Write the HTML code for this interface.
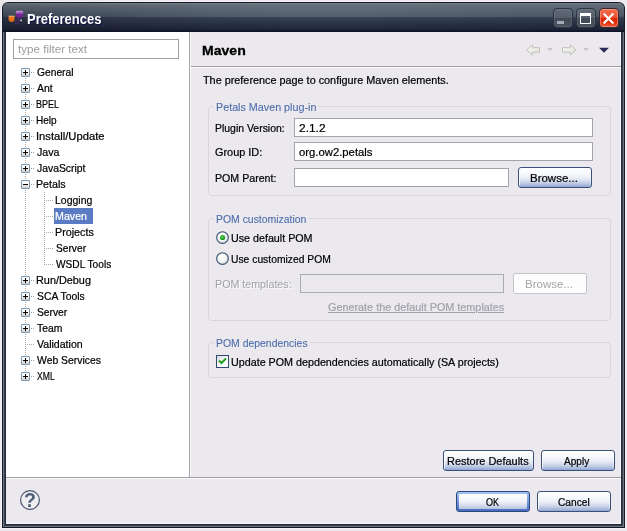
<!DOCTYPE html>
<html>
<head>
<meta charset="utf-8">
<title>Preferences</title>
<style>
html,body{margin:0;padding:0;}
body{width:627px;height:531px;overflow:hidden;position:relative;background:#ebe9ee;font-family:"Liberation Sans",sans-serif;font-size:11px;color:#000;}
div,span,i{position:absolute;box-sizing:border-box;}
#root{left:0;top:0;width:627px;height:531px;will-change:transform;}
.t{white-space:pre;line-height:14px;transform-origin:0 0;-webkit-text-stroke:0.22px;}
/* window frame */
#frame{left:2px;top:2px;width:623px;height:526px;background:#161b26;border-radius:6px 6px 0 0;box-shadow:0 0 0 1px #f5f3f9;}
#frame2{left:3px;top:3px;width:621px;height:524px;background:#6a7480;border-radius:5px 5px 0 0;}
#frame3{left:4px;top:4px;width:619px;height:522px;background:#3a4250;border-radius:4px 4px 0 0;}
#frame4{left:5px;top:5px;width:617px;height:520px;background:#242a3a;}
#tbar{left:3px;top:3px;width:621px;height:29px;border-radius:5px 5px 0 0;
  background:linear-gradient(to bottom,#7c868f 0,#6b7681 1px,#64707b 2px,#535f6e 13.5px,#3a4557 14px,#2c3548 20px,#1e2438 27px,#10142a 28px,#10142a 29px);}
#tshade{left:3px;top:3px;width:621px;height:29px;border-radius:5px 5px 0 0;-webkit-mask-image:linear-gradient(to bottom,rgba(0,0,0,.25) 0,rgba(0,0,0,.6) 20%,#000 48%,#000 100%);mask-image:linear-gradient(to bottom,rgba(0,0,0,.25) 0,rgba(0,0,0,.6) 20%,#000 48%,#000 100%);
  background:linear-gradient(to right,rgba(10,14,24,.32) 0,rgba(10,14,24,.24) 15%,rgba(10,14,24,.08) 32%,rgba(10,14,24,0) 45%,rgba(10,14,24,0) 60%,rgba(10,14,24,.08) 85%,rgba(10,14,24,.1) 100%);}
#client{left:6px;top:32px;width:615px;height:492px;background:#ebe9ed;}
.ttl{text-shadow:1px 1px 0 #0c1450;}
/* caption buttons */
.cb{top:8px;width:20px;height:20px;border-radius:4px;border:1px solid #2a323e;box-shadow:inset 0 0 0 1px rgba(140,150,165,.22);background:linear-gradient(to bottom,#616c78 0,#545f6b 48%,#414b57 52%,#48525e 100%);}
#bclose{border-color:#3a2a30;box-shadow:inset 0 0 0 1px rgba(255,190,170,.45);background:linear-gradient(to bottom,#f06c4c 0,#ea5232 46%,#df2404 52%,#e2300c 75%,#ea5a3c 100%);}
/* left pane */
#lpane{left:6px;top:32px;width:183px;height:445px;background:#fff;}
#sash{left:189px;top:32px;width:1px;height:445px;background:#a5a3a8;}
#filter{left:13px;top:39px;width:166px;height:20px;border:1px solid #9f9fa3;background:#fff;}
.xb{width:9px;height:9px;border:1px solid #7898b5;border-radius:1px;background:linear-gradient(to bottom,#fff 0,#fcfcfb 40%,#cfcdc4 100%);}
.xb .h{left:1px;top:3px;width:5px;height:1px;background:#000;}
.xb .v{left:3px;top:1px;width:1px;height:5px;background:#000;}
.dh{height:1px;background-image:repeating-linear-gradient(to right,#a6a6a6 0,#a6a6a6 1px,transparent 1px,transparent 2px);}
.dv{width:1px;background-image:repeating-linear-gradient(to bottom,#a6a6a6 0,#a6a6a6 1px,transparent 1px,transparent 2px);}
#sel{left:54px;top:208px;width:39px;height:16px;background:#5b7cc4;}
/* right pane */
.hsep{height:1px;background:#a09ea4;}
.grp{left:208px;width:403px;border:1px solid #d8d6db;border-radius:4px;}
.leg{background:#ebe9ed;height:3px;}
.inp{height:19px;border:1px solid #a3a3ab;background:#fff;}
.btn{height:21px;border:1px solid #3b5079;border-radius:3px;background:linear-gradient(to bottom,#fdfeff 0,#f7f8fc 30%,#eceff6 50%,#d3dbec 70%,#aebedd 88%,#8fa6d1 100%);box-shadow:inset 1px 1px 0 0 rgba(255,255,255,.75),inset -1px 0 0 0 rgba(255,255,255,.35);}
.btn.def{box-shadow:none;border-color:#2c4880;background:linear-gradient(to bottom,#a4c2f2 0,#7a9ee2 45%,#5d84d2 75%,#466cbe 100%);}
.btn.def i{left:2px;top:2px;right:2px;bottom:2px;border-radius:1px;background:linear-gradient(to bottom,#fdfeff 0,#f7f8fc 30%,#eceff6 55%,#d3dbec 78%,#b4c3e0 100%);}
.btn.off{border-color:#c6c4cb;background:#fdfdfe;box-shadow:none;border-radius:2px;}
.dis{text-shadow:1px 1px 0 #fff;-webkit-text-stroke:0;}
.lg{-webkit-text-stroke:0.1px;}
.hd{-webkit-text-stroke:0.3px !important;}
.ph{-webkit-text-stroke:0;}
.lnk{text-decoration:underline;}
.rad{width:13px;height:13px;border-radius:50%;border:1.3px solid #2f4a72;background:radial-gradient(circle at 35% 35%,#fff 0,#f4f4f4 45%,#d8d8dc 100%);}
.rad i{left:2.7px;top:2.7px;width:5px;height:5px;border-radius:50%;background:radial-gradient(circle at 40% 40%,#60d860 0,#20a020 70%,#108010 100%);}
#chk{left:216px;top:355px;width:13px;height:13px;border:1px solid #2f4a70;background:linear-gradient(135deg,#dcdce0 0,#fff 70%);}
</style>
</head>
<body>
<div id="root">
<div id="frame"></div><div id="frame2"></div><div id="frame3"></div><div id="frame4"></div>
<div id="tbar"></div><div id="tshade"></div>
<div id="client"></div><div style="left:620px;top:32px;width:1px;height:492px;background:#f6f5f9"></div><div style="left:6px;top:523px;width:615px;height:1px;background:#f6f5f9"></div>

<!-- title icon -->
<svg style="position:absolute;left:8px;top:10px" width="17" height="17" viewBox="0 0 17 17">
  <defs>
    <linearGradient id="pg" x1="0" y1="0" x2="0" y2="1"><stop offset="0" stop-color="#c9a2df"/><stop offset=".38" stop-color="#8f45b0"/><stop offset=".42" stop-color="#782595"/><stop offset="1" stop-color="#6b1f88"/></linearGradient>
    <linearGradient id="og" x1="0" y1="0" x2="0" y2="1"><stop offset="0" stop-color="#f6b684"/><stop offset=".22" stop-color="#ee7a22"/><stop offset="1" stop-color="#e4640c"/></linearGradient>
  </defs>
  <path d="M7.8 2 Q7.8 0.8 9 0.8 H14 Q15.2 0.8 15.2 2 V4.6 Q15.2 8 11.5 8 Q7.8 8 7.8 4.6 Z" fill="url(#pg)"/>
  <path d="M0.6 5.8 H6.5 V9 Q6.5 12 3.55 12 Q0.6 12 0.6 9 Z" fill="url(#og)"/>
  <rect x="7.4" y="10.1" width="3" height="3.5" rx="1.1" fill="none" stroke="#5a2a7c" stroke-width="1" opacity=".8"/>
  <rect x="12.3" y="9.6" width="1.7" height="1.7" fill="#cfc8dc"/>
  <rect x="10" y="8.6" width="1.6" height="1.4" fill="#5e2880" opacity=".9"/>
</svg>

<!-- caption buttons -->
<div class="cb" id="bmin" style="left:553px"><i style="left:3px;top:12px;width:7px;height:3px;background:#a4acb8"></i></div>
<div class="cb" id="bmax" style="left:576px"><i style="left:3px;top:4px;width:11px;height:11px;border:1px solid #fff;border-top-width:3px"></i></div>
<div class="cb" id="bclose" style="left:599px">
  <svg style="position:absolute;left:0;top:0" width="18" height="18" viewBox="0 0 18 18"><path d="M3.6 4.6 L13.4 14.4 M13.4 4.6 L3.6 14.4" stroke="#fff" stroke-width="2.1" stroke-linecap="butt"/></svg>
</div>

<!-- left pane -->
<div id="lpane"></div>
<div id="sash"></div><div style="left:190px;top:32px;width:1px;height:445px;background:#fbfbfc"></div>
<div id="filter"></div>
<div class="dv" style="left:25px;top:78px;height:295px"></div>
<div class="dv" style="left:44px;top:192px;height:73px"></div>
<div id="sel"></div>
<div class="xb" style="left:21px;top:68px"><i class="h"></i><i class="v"></i></div>
<div class="dh" style="left:31px;top:72px;width:4px"></div>
<div class="xb" style="left:21px;top:84px"><i class="h"></i><i class="v"></i></div>
<div class="dh" style="left:31px;top:88px;width:4px"></div>
<div class="xb" style="left:21px;top:100px"><i class="h"></i><i class="v"></i></div>
<div class="dh" style="left:31px;top:104px;width:4px"></div>
<div class="xb" style="left:21px;top:116px"><i class="h"></i><i class="v"></i></div>
<div class="dh" style="left:31px;top:120px;width:4px"></div>
<div class="xb" style="left:21px;top:132px"><i class="h"></i><i class="v"></i></div>
<div class="dh" style="left:31px;top:136px;width:4px"></div>
<div class="xb" style="left:21px;top:148px"><i class="h"></i><i class="v"></i></div>
<div class="dh" style="left:31px;top:152px;width:4px"></div>
<div class="xb" style="left:21px;top:164px"><i class="h"></i><i class="v"></i></div>
<div class="dh" style="left:31px;top:168px;width:4px"></div>
<div class="xb" style="left:21px;top:180px"><i class="h"></i></div>
<div class="dh" style="left:31px;top:184px;width:4px"></div>
<div class="dh" style="left:46px;top:200px;width:8px"></div>
<div class="dh" style="left:46px;top:216px;width:8px"></div>
<div class="dh" style="left:46px;top:232px;width:8px"></div>
<div class="dh" style="left:46px;top:248px;width:8px"></div>
<div class="dh" style="left:46px;top:264px;width:8px"></div>
<div class="xb" style="left:21px;top:276px"><i class="h"></i><i class="v"></i></div>
<div class="dh" style="left:31px;top:280px;width:4px"></div>
<div class="xb" style="left:21px;top:292px"><i class="h"></i><i class="v"></i></div>
<div class="dh" style="left:31px;top:296px;width:4px"></div>
<div class="xb" style="left:21px;top:308px"><i class="h"></i><i class="v"></i></div>
<div class="dh" style="left:31px;top:312px;width:4px"></div>
<div class="xb" style="left:21px;top:324px"><i class="h"></i><i class="v"></i></div>
<div class="dh" style="left:31px;top:328px;width:4px"></div>
<div class="dh" style="left:25px;top:344px;width:10px"></div>
<div class="xb" style="left:21px;top:356px"><i class="h"></i><i class="v"></i></div>
<div class="dh" style="left:31px;top:360px;width:4px"></div>
<div class="xb" style="left:21px;top:372px"><i class="h"></i><i class="v"></i></div>
<div class="dh" style="left:31px;top:376px;width:4px"></div>

<!-- right pane header -->
<div class="hsep" style="left:191px;top:66px;width:430px"></div><div style="left:191px;top:67px;width:430px;height:1px;background:#fbfbfc"></div>
<svg style="position:absolute;left:524px;top:42px" width="90" height="16" viewBox="0 0 90 16">
  <defs><linearGradient id="ag" x1="0" y1="0" x2="1" y2="1"><stop offset="0" stop-color="#fcfcfa"/><stop offset="1" stop-color="#dddcd4"/></linearGradient></defs>
  <path d="M2.5 8 L8.5 2.9 V5.7 H15.5 V10.2 H8.5 V13.1 Z" fill="url(#ag)" stroke="#c1c0bb" stroke-width="1"/>
  <path d="M23 6 H29 L26 9 Z" fill="#c8c7c6"/>
  <path d="M52 8 L46.5 2.9 V5.7 H38.5 V10.2 H46.5 V13.1 Z" fill="url(#ag)" stroke="#c1c0bb" stroke-width="1"/>
  <path d="M59 6 H65 L62 9 Z" fill="#c8c7c6"/>
  <path d="M75 5.8 H85 L80 10.8 Z" fill="#2a2a5a"/>
</svg>

<!-- groups -->
<div class="grp" style="top:106px;height:90px"></div>
<div class="leg" style="left:214px;top:105px;width:104px"></div>
<div class="inp" style="left:294px;top:118px;width:299px"></div>
<div class="inp" style="left:294px;top:142px;width:299px"></div>
<div class="inp" style="left:294px;top:168px;width:215px"></div>
<div class="btn" style="left:518px;top:167px;width:74px"></div>

<div class="grp" style="top:218px;height:103px"></div>
<div class="leg" style="left:214px;top:217px;width:95px"></div>
<svg style="position:absolute;left:215px;top:230px" width="15" height="15" viewBox="0 0 15 15"><defs><radialGradient id="rg" cx=".35" cy=".35" r=".8"><stop offset="0" stop-color="#fff"/><stop offset=".55" stop-color="#f3f3f3"/><stop offset="1" stop-color="#d9d9de"/></radialGradient><radialGradient id="gg" cx=".4" cy=".4" r=".7"><stop offset="0" stop-color="#58d458"/><stop offset=".6" stop-color="#24a424"/><stop offset="1" stop-color="#128012"/></radialGradient></defs><circle cx="7.5" cy="7.5" r="5.8" fill="url(#rg)" stroke="#34506f" stroke-width="1.15"/><circle cx="7.5" cy="7.5" r="2.6" fill="url(#gg)"/></svg>
<svg style="position:absolute;left:215px;top:251px" width="15" height="15" viewBox="0 0 15 15"><circle cx="7.5" cy="7.5" r="5.8" fill="url(#rg)" stroke="#34506f" stroke-width="1.15"/></svg>
<div class="inp" style="left:300px;top:274px;width:204px;background:#ebe9ed;border-color:#ababb3"></div>
<div class="btn off" style="left:513px;top:273px;width:74px"></div>

<div class="grp" style="top:342px;height:36px"></div>
<div class="leg" style="left:214px;top:341px;width:96px"></div>
<div id="chk"><svg style="position:absolute;left:0;top:0" width="11" height="11" viewBox="0 0 11 11"><path d="M2 4.5 L4.5 7 L9 2.5" fill="none" stroke="#22a022" stroke-width="2"/></svg></div>

<!-- bottom buttons -->
<div class="btn" style="left:443px;top:450px;width:91px"></div>
<div class="btn" style="left:541px;top:450px;width:74px"></div>
<div class="hsep" style="left:6px;top:477px;width:615px"></div><div style="left:6px;top:478px;width:615px;height:1px;background:#fbfbfc"></div>
<div class="btn def" style="left:456px;top:491px;width:74px"><i></i></div>
<div class="btn" style="left:537px;top:491px;width:74px"></div>

<!-- help icon -->
<svg style="position:absolute;left:19px;top:489px" width="22" height="22" viewBox="0 0 22 22">
  <circle cx="11" cy="11" r="9.4" fill="#efeef1" stroke="#4c5872" stroke-width="1.2"/>
  <text x="11" y="18" text-anchor="middle" font-family="Liberation Sans, sans-serif" font-weight="bold" font-size="19.5" fill="#50607c">?</text>
</svg>

<span class="t" style="left:37.00px;top:65.0px;transform:scaleX(0.9333);">General</span>
<span class="t" style="left:37.00px;top:81.0px;transform:scaleX(0.9471);">Ant</span>
<span class="t" style="left:36.19px;top:97.0px;transform:scaleX(0.8148);">BPEL</span>
<span class="t" style="left:36.09px;top:113.0px;transform:scaleX(0.9136);">Help</span>
<span class="t" style="left:35.98px;top:129.0px;transform:scaleX(1.0182);">Install/Update</span>
<span class="t" style="left:37.00px;top:145.0px;transform:scaleX(0.9652);">Java</span>
<span class="t" style="left:37.00px;top:161.0px;transform:scaleX(0.9442);">JavaScript</span>
<span class="t" style="left:36.03px;top:177.0px;transform:scaleX(0.9690);">Petals</span>
<span class="t" style="left:55.05px;top:193.0px;transform:scaleX(0.9526);">Logging</span>
<span class="t" style="left:55.03px;top:209.0px;transform:scaleX(0.9688);color:#fff;">Maven</span>
<span class="t" style="left:55.02px;top:225.0px;transform:scaleX(0.9769);">Projects</span>
<span class="t" style="left:56.00px;top:241.0px;transform:scaleX(0.9273);">Server</span>
<span class="t" style="left:56.00px;top:257.0px;transform:scaleX(0.9217);">WSDL Tools</span>
<span class="t" style="left:36.01px;top:273.0px;transform:scaleX(0.9870);">Run/Debug</span>
<span class="t" style="left:37.00px;top:289.0px;transform:scaleX(0.9440);">SCA Tools</span>
<span class="t" style="left:37.00px;top:305.0px;transform:scaleX(0.9333);">Server</span>
<span class="t" style="left:37.00px;top:321.0px;transform:scaleX(0.9407);">Team</span>
<span class="t" style="left:37.00px;top:337.0px;transform:scaleX(0.9617);">Validation</span>
<span class="t" style="left:37.00px;top:353.0px;transform:scaleX(0.9456);">Web Services</span>
<span class="t" style="left:37.00px;top:369.0px;transform:scaleX(0.7826);">XML</span>
<span class="t ph" style="left:17.50px;top:42.0px;transform:scaleX(1.0561);color:#9c9c9c;">type filter text</span>
<span class="t ttl" style="left:27.00px;top:11.7px;transform:scaleX(0.8976);font-size:14.5px;font-weight:bold;-webkit-text-stroke:0;color:#fff;">Preferences</span>
<span class="t hd" style="left:202.20px;top:44.0px;transform:scaleX(1.1703);font-size:12px;font-weight:bold;-webkit-text-stroke:0;">Maven</span>
<span class="t" style="left:203.00px;top:73.0px;transform:scaleX(0.9851);">The preference page to configure Maven elements.</span>
<span class="t lg" style="left:215.72px;top:100.0px;transform:scaleX(0.9772);color:#4d6dab;">Petals Maven plug-in</span>
<span class="t" style="left:214.85px;top:121.0px;transform:scaleX(0.9500);">Plugin Version:</span>
<span class="t" style="left:215.20px;top:145.0px;transform:scaleX(0.9915);">Group ID:</span>
<span class="t" style="left:214.83px;top:171.0px;transform:scaleX(0.9661);">POM Parent:</span>
<span class="t" style="left:299.00px;top:121.0px;transform:scaleX(1.0833);">2.1.2</span>
<span class="t" style="left:299.00px;top:145.0px;transform:scaleX(1.0268);">org.ow2.petals</span>
<span class="t" style="left:529.76px;top:171.0px;transform:scaleX(1.0432);">Browse...</span>
<span class="t lg" style="left:215.75px;top:212.0px;transform:scaleX(0.9479);color:#4d6dab;">POM customization</span>
<span class="t" style="left:230.83px;top:231.0px;transform:scaleX(0.9732);">Use default POM</span>
<span class="t" style="left:230.86px;top:252.0px;transform:scaleX(0.9381);">Use customized POM</span>
<span class="t dis" style="left:214.63px;top:277.0px;transform:scaleX(0.9714);color:#a0a0a8;">POM templates:</span>
<span class="t dis" style="left:525.25px;top:277.0px;transform:scaleX(1.0455);color:#a4a4a8;">Browse...</span>
<span class="t lnk" style="left:327.70px;top:300.0px;transform:scaleX(0.9838);color:#a2a2aa;">Generate the default POM templates</span>
<span class="t lg" style="left:215.75px;top:336.0px;transform:scaleX(0.9484);color:#4d6dab;">POM dependencies</span>
<span class="t" style="left:230.82px;top:355.0px;transform:scaleX(0.9755);">Update POM depdendencies automatically (SA projects)</span>
<span class="t" style="left:447.00px;top:454.0px;transform:scaleX(0.9963);">Restore Defaults</span>
<span class="t" style="left:564.00px;top:454.0px;transform:scaleX(0.9143);">Apply</span>
<span class="t" style="left:485.90px;top:495.0px;transform:scaleX(0.8188);">OK</span>
<span class="t" style="left:557.80px;top:495.0px;transform:scaleX(0.9265);">Cancel</span>
</div>
</body>
</html>
